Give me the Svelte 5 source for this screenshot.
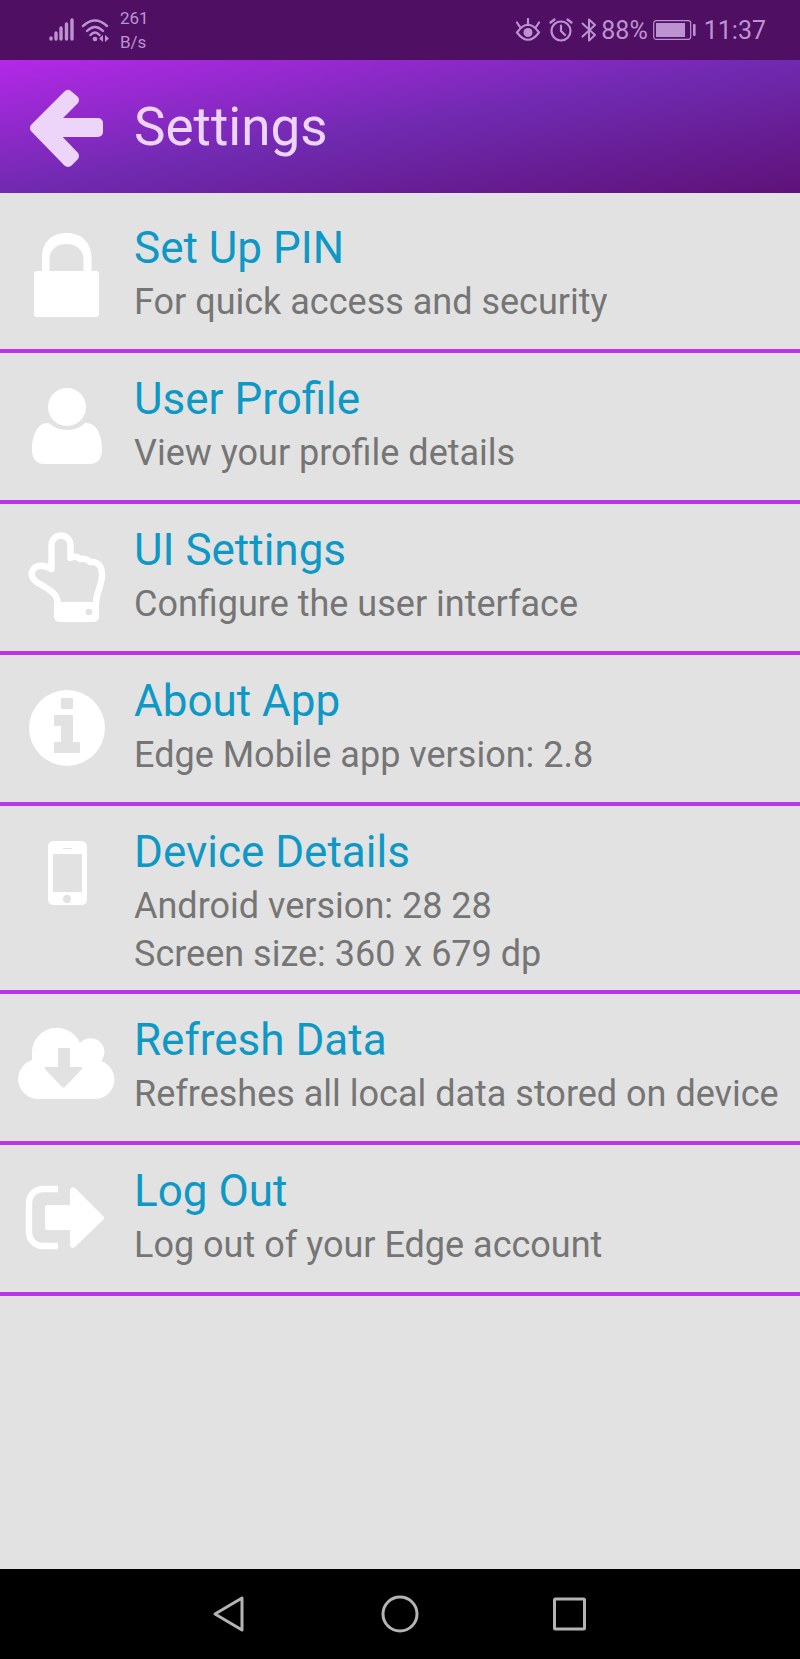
<script>
	let battery = 88

	// fill is drawn solid (evenodd, so inner shapes are holes), line is stroked
	const items = [
		{
			title: 'Set Up PIN',
			details: ['For quick access and security'],
			fill: 'M37 69H42V56C42 41 51 31 66.5 31S91.5 41 91.5 56V69H96Q99 69 99 72V112Q99 115 96 115H37Q34 115 34 112V72Q34 69 37 69ZM49.500 69H83.500V57C83.500 48 76 42 66.500 42S49.500 48 49.500 57Z'
		},
		{
			title: 'User Profile',
			details: ['View your profile details'],
			fill: 'M48 54a19 19 0 1 0 38 0a19 19 0 1 0 -38 0ZM49 70C53 74 59 77 67 77S81 74 85 70C96 69 102 81 102 97C102 106 97 111 90 111H44C37 111 32 106 32 97C32 81 38 69 49 70Z'
		},
		{
			title: 'UI Settings',
			details: ['Configure the user interface'],
			fill: 'M54 98H99V112Q99 118 93 118H60Q54 118 54 112ZM85.700 108a3.300 3.300 0 1 0 6.600 0a3.300 3.300 0 1 0 -6.600 0Z',
			line: 'M58 100C58 90 49 85 38 79C32 75 30 70 33 66C36 60 45 61 51.500 65V41a9.500 9.500 0 0 1 19 0V54Q76 51 80 55Q86 54 90 58C98 57 102 62 102 71C102 82 96 88 96 100'
		},
		{
			title: 'About App',
			details: ['Edge Mobile app version: 2.8'],
			fill: 'M29 73a38 38 0 1 0 76 0a38 38 0 1 0 -76 0ZM62 43H72Q73 43 73 44V53Q73 54 72 54H62Q61 54 61 53V44Q61 43 62 43ZM55 60H72Q73 60 73 61V87H79Q80 87 80 88V97Q80 98 79 98H55Q54 98 54 97V88Q54 87 55 87H61V71H55Q54 71 54 70V61Q54 60 55 60Z'
		},
		{
			title: 'Device Details',
			details: ['Android version: 28 28', 'Screen size: 360 x 679 dp'],
			fill: 'M54 35H81Q87 35 87 41V93Q87 99 81 99H54Q48 99 48 93V41Q48 35 54 35ZM53 48V86H82V48ZM63 42V43H72V42ZM63 93a4 4 0 1 0 8 0a4 4 0 1 0 -8 0Z'
		},
		{
			title: 'Refresh Data',
			details: ['Refreshes all local data stored on device'],
			fill: 'M39 105A20 20 0 0 1 32 66V59A25 25 0 0 1 80 49A13 13 0 0 1 101 67A19.500 19.500 0 0 1 96 105ZM58 54V73H46Q44 73 45 75L62 93Q63.500 94 65 93L82 75Q83 73 81 73H70V54Z'
		},
		{
			title: 'Log Out',
			details: ['Log out of your Edge account'],
			fill: 'M47 60H70V45Q71 41 75 43L103 71Q105 73 103 75L75 102Q71 105 70 100V85H47Q45 85 45 83V62Q45 60 47 60Z',
			line: 'M58 44H43a14 14 0 0 0 -14 14V87a14 14 0 0 0 14 14H58'
		}
	]
</script>

<div class="screen">
	<div class="status">
		<div class="network">
			<svg width="26" height="24" viewBox="0 0 26 24">
				<path d="M2 20V21M7 15V21M12 10V21M17.500 6V21M23 2V21" stroke="currentColor" stroke-width="3.400" stroke-linecap="round" />
			</svg>
			<svg width="28" height="24" viewBox="0 0 28 24">
				<path d="M2 8Q14 -3 26 8M6 13Q14 5 22 13M9.500 17Q14 12 18.500 17" fill="none" stroke="currentColor" stroke-width="2.400" stroke-linecap="round" />
				<circle cx="14" cy="21" r="2.300" fill="currentColor" />
				<path d="M22 17V24L18 20.500ZM24 17V24L28 20.500Z" fill="currentColor" />
			</svg>
			<div class="speed">261<br />B/s</div>
		</div>
		<div class="system">
			<svg width="26" height="24" viewBox="0 0 26 24">
				<path d="M2 14.500Q13 -1 24 14.500Q13 29 2 14.500ZM13 7V1M5 9L2 4.500M21 9L24 4.500" fill="none" stroke="currentColor" stroke-width="2.200" stroke-linecap="round" stroke-linejoin="round" />
				<circle cx="13" cy="14.500" r="4.500" fill="currentColor" />
			</svg>
			<svg width="24" height="24" viewBox="0 0 24 24">
				<circle cx="12" cy="13" r="9.500" fill="none" stroke="currentColor" stroke-width="2.200" />
				<path d="M12 7.500V13L16 17M1.500 4.500L5.500 1.500M22.500 4.500L18.500 1.500" fill="none" stroke="currentColor" stroke-width="2.200" stroke-linecap="round" />
			</svg>
			<svg width="16" height="24" viewBox="0 0 16 24">
				<path d="M1.500 5.500L14 17L8 22.500V1.500L14 7L1.500 18.500" fill="none" stroke="currentColor" stroke-width="2" stroke-linejoin="round" stroke-linecap="round" />
			</svg>
			<span class="percent">{battery}%</span>
			<svg class="battery" width="43" height="20" viewBox="0 0 43 20">
				<rect x="0.700" y="0.700" width="37" height="18.600" rx="2.500" fill="none" stroke="currentColor" stroke-width="1.200" />
				<rect x="3" y="3" width={battery * 0.33} height="14" fill="currentColor" />
				<rect x="40" y="4" width="2.600" height="12" rx="1" fill="currentColor" />
			</svg>
			<span>11:37</span>
		</div>
	</div>

	<header>
		<button class="back" aria-label="Back">
			<svg width="134" height="133" viewBox="0 0 134 133">
				<path d="M35 68L68 35L74 40L51 63H98V72H51L74 96L68 102Z" fill="currentColor" stroke="currentColor" stroke-width="10" stroke-linejoin="round" />
			</svg>
		</button>
		<h1>Settings</h1>
	</header>

	<main>
		<ul>
			{#each items as item}
				<li>
					<button class="item">
						<svg class="icon" width="134" height="130" viewBox="0 0 134 130">
							<path d={item.fill} fill="#fff" fill-rule="evenodd" />
							{#if item.line}
								<path d={item.line} fill="none" stroke="#fff" stroke-width="6.400" stroke-linejoin="round" />
							{/if}
						</svg>
						<span class="text">
							<span class="title">{item.title}</span>
							{#each item.details as detail}
								<span class="detail">{detail}</span>
							{/each}
						</span>
					</button>
				</li>
			{/each}
		</ul>
	</main>

	<nav>
		<button aria-label="Back">
			<svg width="40" height="40" viewBox="0 0 40 40"><path d="M5 20L32 4V36Z" /></svg>
		</button>
		<button aria-label="Home">
			<svg width="40" height="40" viewBox="0 0 40 40"><circle cx="20" cy="20" r="17" /></svg>
		</button>
		<button aria-label="Recent apps">
			<svg width="40" height="40" viewBox="0 0 40 40"><rect x="4.500" y="5" width="30" height="30" rx="1" /></svg>
		</button>
	</nav>
</div>

<style>
	:global(body) {
		margin: 0;
		background: #e2e2e2;
	}

	.screen {
		min-height: 100vh;
		display: flex;
		flex-direction: column;
		font-family: Roboto, sans-serif;
		background: #e2e2e2;
	}

	svg {
		display: block;
		flex: none;
	}

	button {
		margin: 0;
		padding: 0;
		border: none;
		background: none;
		color: inherit;
		font: inherit;
		text-align: left;
		cursor: pointer;
	}

	.status {
		height: 60px;
		padding: 0 34px 0 49px;
		display: flex;
		align-items: center;
		justify-content: space-between;
		background: #4f1064;
		color: #bd92d1;
		font-size: 25px;
	}

	.network, .system {
		display: flex;
		align-items: center;
	}

	.network {
		gap: 6px;
	}

	.speed {
		margin-left: 5px;
		font-size: 17px;
		line-height: 24px;
	}

	.system {
		gap: 8px;
	}

	.percent {
		margin: 0 -3px 0 -4px;
	}

	header {
		display: flex;
		align-items: center;
		background: linear-gradient(to bottom right, #b429e8, #702ab0 50%, #5e1278);
		color: #edd5fa;
	}

	h1 {
		margin: 0;
		font-size: 53px;
		line-height: 64px;
		font-weight: 400;
	}

	main {
		flex: 1;
		padding-top: 9px;
	}

	ul {
		margin: 0;
		padding: 0;
		list-style: none;
	}

	li {
		border-bottom: 4px solid #b935ea;
	}

	.item {
		width: 100%;
		min-height: 147px;
		display: flex;
		align-items: flex-start;
	}

	.text {
		padding: 17px 0 12px;
	}

	.title, .detail {
		display: block;
	}

	.title {
		font-size: 44px;
		line-height: 59px;
		color: #0d98c6;
	}

	.detail {
		font-size: 36px;
		line-height: 48px;
		color: #757575;
	}

	nav {
		height: 90px;
		display: flex;
		align-items: center;
		justify-content: center;
		gap: 110px;
		background: #000;
	}

	nav button {
		width: 60px;
		display: flex;
		justify-content: center;
	}

	nav svg {
		fill: none;
		stroke: #b4b4b4;
		stroke-width: 3;
		stroke-linejoin: round;
	}
</style>
